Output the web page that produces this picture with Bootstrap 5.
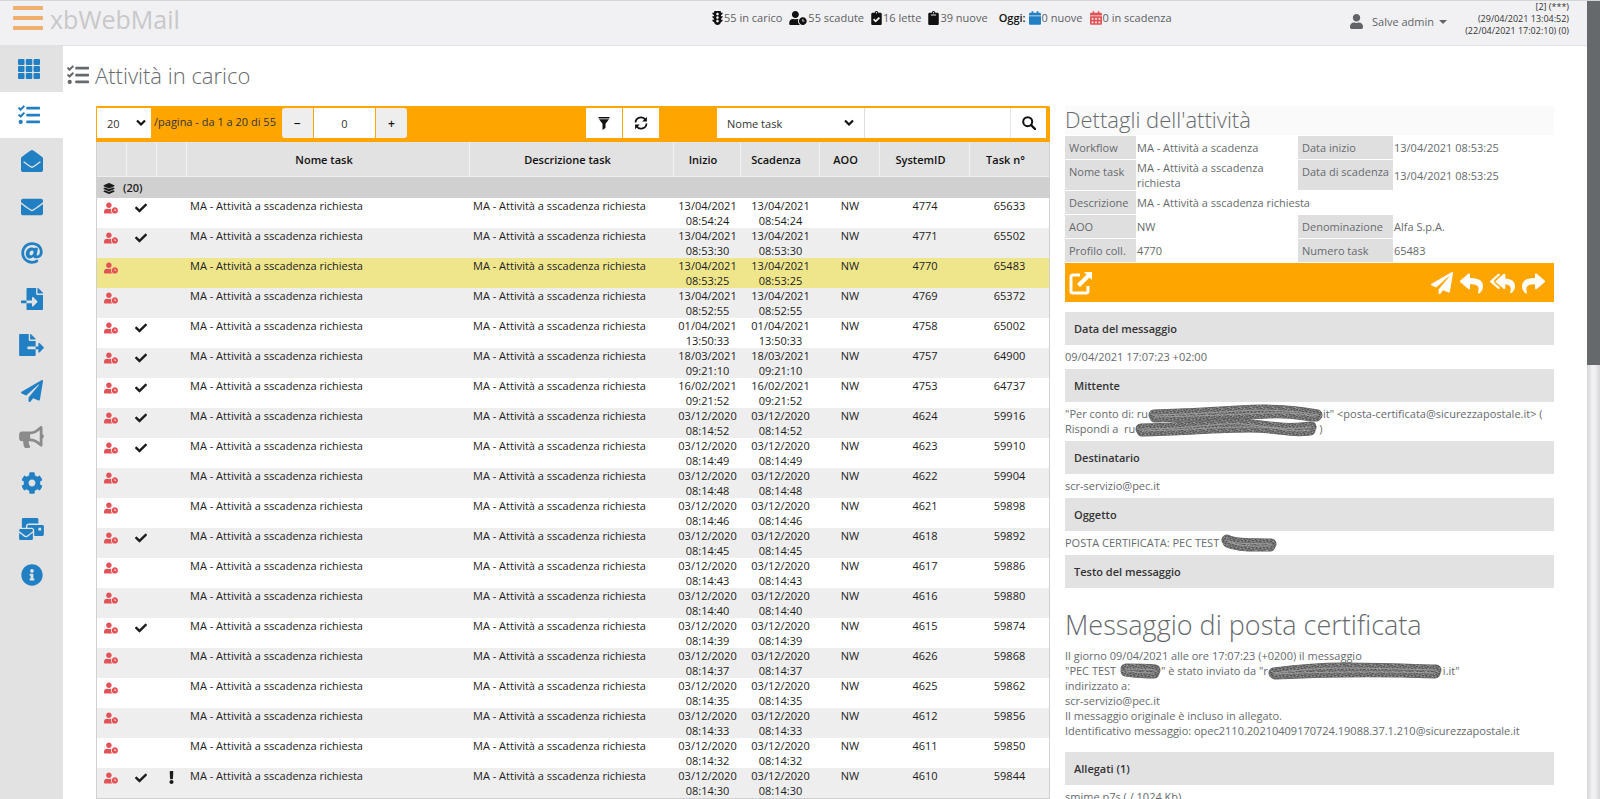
<!DOCTYPE html>
<html lang="it">
<head>
<meta charset="utf-8">
<meta name="viewport" content="width=device-width, initial-scale=1">
<title>xbWebMail - Attività in carico</title>
<link href="https://cdn.jsdelivr.net/npm/bootstrap@5.3.0/dist/css/bootstrap.min.css" rel="stylesheet">
<style>
  :root { --blue: #2080c3; --orange: #ffa500; --red: #e25256; --panel: #e2e2e2; --ink: #666a6d; }
  body { font-family: "Open Sans", sans-serif; font-size: 11px; line-height: 15px; color: var(--ink); background: #fff; font-weight: 400; }
  .shell { height: 100vh; border-top: 1px solid #d5d5d8; overflow: hidden; }
  svg.ico { fill: currentColor; display: inline-block; flex: none; }

  .topbar { display: grid; grid-template-columns: 712fr 632fr 243fr; height: 45px; background: #f1f1f3; border-bottom: 1px solid #e1e1e4; flex: none; }
  .brand { gap: 7px; padding: 0 0 8px 13px; color: #c8c8ca; font-size: 25px; line-height: 32px; text-decoration: none; }
  .brand svg { color: #eeb06c; }
  .stats { color: #5d6063; gap: 7px; height: 33px; }
  .stats b { color: #111; font-weight: 600; margin-left: 4px; margin-right: -4px; }
  .stats svg { color: #111; }
  .stat { gap: 1px; }
  .who { border: 0; background: none; color: #606467; gap: 9px; padding: 0 0 3px 6px; white-space: nowrap; font-weight: 500; }
  .who::after { margin-left: -4px; border-width: 4px 4px 0; }
  .session { color: #333; font-size: 9px; line-height: 12px; padding-right: 18px; white-space: nowrap; }

  .rail { width: 63px; background: var(--panel); }
  .rail a { height: 46px; color: var(--blue); display: flex; align-items: center; justify-content: center; }
  .rail a.active { background: #fff; }
  .rail a.lead-item { padding-right: 5px; }
  .rail a.off { color: #8b8b8b; }

  .main-area { padding: 0 33px 0 4px; }
  .page-title { height: 60px; gap: 6px; margin: 0; padding-bottom: 2px; font-size: 22px; line-height: 30px; font-weight: 300; }
  .split { display: grid; grid-template-columns: 954fr 489fr; gap: 15px; padding-left: 29px; align-items: start; }

  .grid-card { border: 1px solid #d0d0d0; border-top: 0; }
  .tools { height: 36px; margin: 0 -1px; padding: 2px 4px 2px 1px; background: var(--orange); border-radius: 2px 2px 0 0; color: #333; }
  .tools select, .tools input { border: 0; border-radius: 0; height: 30px; background-color: #fff; color: #333; font-size: 11px; box-shadow: none; min-width: 0; }
  .tools select { appearance: none; padding: 0 10px; background-image: url("data:image/svg+xml,%3Csvg xmlns='http://www.w3.org/2000/svg' viewBox='0 0 10 8'%3E%3Cpath d='M1 1.5l4 4 4-4' fill='none' stroke='%23111' stroke-width='2.2'/%3E%3C/svg%3E"); background-repeat: no-repeat; background-size: 10px 8px; background-position: right 5px center; }
  .tools button { border: 0; border-radius: 0; height: 30px; padding: 0; background: #fff; color: #111; display: flex; align-items: center; justify-content: center; font-size: 12px; }
  .tools .range { padding: 6px 0 0 3px; white-space: nowrap; }
  .stepper { width: 125px; margin-left: 6px; gap: 1px; }
  .stepper button { width: 31px; background: #eee; font-weight: 600; }
  .stepper button:first-child { border-radius: 3px 0 0 3px; }
  .stepper button:last-child { border-radius: 0 3px 3px 0; }
  .stepper input { flex: 1; text-align: center; }
  .duo { gap: 1px; margin-right: 58px; }
  .duo button { width: 36px; }
  .finder { width: 329px; }
  .finder select { width: 148px; background-position: right 10px center; border-right: 1px solid #ddd; }
  .finder input { flex: 1; }
  .finder button { width: 36px; border-left: 1px solid #e5e5e5; }

  .task-table { width: 100%; table-layout: fixed; border-collapse: separate; border-spacing: 0; color: #1c1c1c; }
  .task-table th { background: var(--panel); height: 35px; padding: 0 8px 0 0; text-align: center; font-weight: 600; border-right: 1px solid #f2f2f2; border-bottom: 1px solid #eee; color: #111; }
  .task-table th:last-child { border-right: 0; }
  .task-table .group-row td { background: #d0d0d0; height: 21px; font-weight: 600; padding: 0 0 1px 6px; }
  .task-table tbody td { padding: 0; height: 30px; vertical-align: top; text-align: center; }
  .task-table tbody tr:nth-child(even) td { background: #eee; }
  .task-table tbody tr:nth-child(odd) td { background: #fff; }
  .task-table tbody tr.picked td { background: #efe68c; }
  .task-table tbody td.txt { text-align: left; padding-left: 3px; }
  .task-table tbody td.sym { padding-right: 2px; }
  .task-table td.sym svg { display: block; margin: 3px auto 0; }
  .late { color: var(--red); }

  .detail h2 { font-size: 22px; line-height: 27px; margin: 0; padding-bottom: 2px; background: #fafafa; font-weight: 300; }
  .facts { width: 100%; table-layout: fixed; border-collapse: separate; border-spacing: 0 1px; }
  .facts th { background: #dfdfdf; font-weight: 400; padding: 4px; border-right: 1px solid #fff; vertical-align: top; white-space: nowrap; }
  .facts td { padding: 0; vertical-align: middle; }
  .actions { background: var(--orange); height: 39px; padding: 1px 9px 0 4px; margin-bottom: 10px; }
  .actions button { border: 0; background: none; padding: 0; color: #fff; display: flex; }
  .replies { gap: 7px; }
  .fieldcap { background: var(--panel); height: 33px; margin: 0; padding: 9px; font-size: 11px; line-height: 15px; font-weight: 600; color: #333; }
  .fieldval { margin: 0; padding: 4px 0 5px; }
  .mail-body h1 { font-size: 27px; line-height: 32px; font-weight: 300; margin: 21px 0 7px; }
  .mail-body p { margin: 0 0 14px; }
  .ink-over { position: relative; display: inline-block; height: 10px; }
  .ink-over svg { position: absolute; left: 0; top: -7px; overflow: visible; fill: none; stroke-linecap: round; stroke-linejoin: round; }

  .scroll-track { width: 13px; background: linear-gradient(90deg, #d5d5d8, #f1f1f3 40%, #f1f1f3 60%, #d5d5d8); flex: none; }
  .scroll-thumb { background: #65696c; }
</style>
</head>
<body>
<svg width="0" height="0" class="position-absolute" aria-hidden="true">
  <pattern id="hatch" width="11" height="7" patternUnits="userSpaceOnUse">
    <path fill="#747474" d="M0 0h11v7H0z"/>
    <path fill="#565656" d="M0 0h2v1H0zM4 0h1v2H4zM7 1h2v1H7zM1 2h1v1H1zM6 3h1v1H6zM9 3h2v1H9zM2 4h2v1H2zM0 5h1v1H0zM5 5h2v1H5zM8 6h1v1H8zM3 6h1v1H3z"/>
    <path fill="#969696" d="M2 1h1v1H2zM6 0h1v1H6zM3 3h2v1H3zM8 4h1v1H8zM10 1h1v1h-1zM1 6h1v1H1zM7 5h1v1H7zM5 4h1v1H5z"/>
  </pattern>
  <symbol id="i-bars" viewBox="0 0 30 26"><path d="M1 0h28a1 1 0 0 1 1 1v2a1 1 0 0 1-1 1H1a1 1 0 0 1-1-1V1a1 1 0 0 1 1-1zM1 10h28a1 1 0 0 1 1 1v2a1 1 0 0 1-1 1H1a1 1 0 0 1-1-1v-2a1 1 0 0 1 1-1zM1 20h28a1 1 0 0 1 1 1v2a1 1 0 0 1-1 1H1a1 1 0 0 1-1-1v-2a1 1 0 0 1 1-1z"/></symbol>
  <symbol id="i-grid" viewBox="0 0 22 20"><path d="M1 0h4.500a1 1 0 0 1 1 1v4a1 1 0 0 1-1 1H1a1 1 0 0 1-1-1V1a1 1 0 0 1 1-1zm7.800 0h4.500a1 1 0 0 1 1 1v4a1 1 0 0 1-1 1H8.800a1 1 0 0 1-1-1V1a1 1 0 0 1 1-1zm7.700 0H21a1 1 0 0 1 1 1v4a1 1 0 0 1-1 1h-4.500a1 1 0 0 1-1-1V1a1 1 0 0 1 1-1zM1 7h4.500a1 1 0 0 1 1 1v4a1 1 0 0 1-1 1H1a1 1 0 0 1-1-1V8a1 1 0 0 1 1-1zm7.800 0h4.500a1 1 0 0 1 1 1v4a1 1 0 0 1-1 1H8.800a1 1 0 0 1-1-1V8a1 1 0 0 1 1-1zm7.700 0H21a1 1 0 0 1 1 1v4a1 1 0 0 1-1 1h-4.500a1 1 0 0 1-1-1V8a1 1 0 0 1 1-1zM1 14h4.500a1 1 0 0 1 1 1v4a1 1 0 0 1-1 1H1a1 1 0 0 1-1-1v-4a1 1 0 0 1 1-1zm7.800 0h4.500a1 1 0 0 1 1 1v4a1 1 0 0 1-1 1H8.800a1 1 0 0 1-1-1v-4a1 1 0 0 1 1-1zm7.700 0H21a1 1 0 0 1 1 1v4a1 1 0 0 1-1 1h-4.500a1 1 0 0 1-1-1v-4a1 1 0 0 1 1-1z"/></symbol>
  <symbol id="i-tasks" viewBox="0 0 512 512"><path d="M139.61 35.5a12 12 0 0 0-17 0L58.93 98.81l-22.7-22.12a12 12 0 0 0-17 0L3.53 92.41a12 12 0 0 0 0 17l47.59 47.4a12.78 12.78 0 0 0 17.61 0l15.59-15.62L156.52 69a12.09 12.09 0 0 0 .09-17zm0 159.19a12 12 0 0 0-17 0l-63.68 63.72-22.7-22.1a12 12 0 0 0-17 0L3.53 252a12 12 0 0 0 0 17L51 316.5a12.77 12.77 0 0 0 17.6 0l15.7-15.69 72.2-72.22a12 12 0 0 0 .09-16.9zM64 368c-26.49 0-48.59 21.5-48.59 48S37.53 464 64 464a48 48 0 0 0 0-96zm432 16H208a16 16 0 0 0-16 16v32a16 16 0 0 0 16 16h288a16 16 0 0 0 16-16v-32a16 16 0 0 0-16-16zm0-320H208a16 16 0 0 0-16 16v32a16 16 0 0 0 16 16h288a16 16 0 0 0 16-16V80a16 16 0 0 0-16-16zm0 160H208a16 16 0 0 0-16 16v32a16 16 0 0 0 16 16h288a16 16 0 0 0 16-16v-32a16 16 0 0 0-16-16z"/></symbol>
  <symbol id="i-env-open" viewBox="0 0 512 512"><path d="M512 464c0 26.51-21.49 48-48 48H48c-26.51 0-48-21.49-48-48V200.724a48 48 0 0 1 18.387-37.776c24.913-19.529 45.501-35.365 164.2-121.511C199.412 29.17 232.797-.347 256 .003c23.198-.354 56.596 29.172 73.413 41.433 118.687 86.137 139.303 101.995 164.2 121.512A48 48 0 0 1 512 200.724V464zm-65.666-196.605c-2.563-3.728-7.7-4.595-11.339-1.907-22.845 16.873-55.462 40.705-105.582 77.079-16.825 12.266-50.21 41.781-73.413 41.43-23.211.344-56.559-29.143-73.413-41.43-50.114-36.37-82.734-60.204-105.582-77.079-3.639-2.688-8.776-1.821-11.339 1.907l-9.072 13.196a7.998 7.998 0 0 0 1.839 10.967c22.887 16.899 55.454 40.69 105.303 76.868 20.274 14.781 56.524 47.813 92.264 47.573 35.724.242 71.961-32.771 92.263-47.573 49.85-36.179 82.418-59.97 105.303-76.868a7.998 7.998 0 0 0 1.839-10.967l-9.071-13.196z"/></symbol>
  <symbol id="i-env" viewBox="0 0 512 512"><path d="M502.3 190.8c3.9-3.1 9.7-.2 9.7 4.7V400c0 26.500-21.500 48-48 48H48c-26.500 0-48-21.500-48-48V195.600c0-5 5.700-7.800 9.700-4.700 22.400 17.400 52.100 39.500 154.100 113.600 21.100 15.400 56.700 47.800 92.200 47.600 35.700.3 72-32.800 92.300-47.600 102-74.100 131.600-96.300 154-113.700zM256 320c23.200.4 56.600-29.200 73.400-41.400 132.700-96.300 142.800-104.700 173.400-128.700 5.800-4.500 9.200-11.500 9.200-18.900v-19c0-26.500-21.500-48-48-48H48c-26.500 0-48 21.500-48 48v19c0 7.400 3.400 14.300 9.200 18.900 30.600 23.900 40.700 32.400 173.400 128.700 16.800 12.200 50.200 41.800 73.400 41.400z"/></symbol>
  <symbol id="i-at" viewBox="0 0 512 512"><path d="M256 8C118.941 8 8 118.919 8 256c0 137.059 110.919 248 248 248 48.154 0 95.342-14.14 135.408-40.223 12.005-7.815 14.625-24.288 5.552-35.372l-10.177-12.433c-7.671-9.371-21.179-11.667-31.373-5.129C325.92 429.757 291.314 440 256 440c-101.458 0-184-82.542-184-184S154.542 72 256 72c100.139 0 184 57.619 184 160 0 38.786-21.093 79.742-58.17 83.693-17.349-.454-16.91-12.857-13.476-30.024l23.433-121.11C394.653 149.75 383.308 136 368.225 136h-44.981a13.518 13.518 0 0 0-13.432 11.993l-.01.092c-14.697-17.901-40.448-21.775-59.971-21.775-74.58 0-137.831 62.234-137.831 151.46 0 65.303 36.785 105.87 96 105.87 26.984 0 57.369-15.637 74.991-38.333 9.522 34.104 40.613 34.103 70.71 34.103C462.609 379.41 504 307.798 504 232 504 95.653 394.023 8 256 8zm-21.68 304.43c-22.249 0-36.07-15.623-36.07-40.771 0-44.993 30.779-72.729 58.63-72.729 22.292 0 35.601 15.241 35.601 40.77 0 45.061-33.875 72.73-58.161 72.73z"/></symbol>
  <symbol id="i-import" viewBox="0 0 512 512"><path d="M16 288c-8.800 0-16 7.200-16 16v32c0 8.800 7.200 16 16 16h112v-64zm489-183L407.100 7c-4.500-4.500-10.600-7-17-7H384v128h128v-6.100c0-6.300-2.500-12.400-7-16.900zm-153 31V0H152c-13.300 0-24 10.700-24 24v264h128v-65.200c0-14.300 17.300-21.400 27.400-11.300L379 308c6.600 6.700 6.600 17.400 0 24l-95.700 96.400c-10.100 10.100-27.400 3-27.400-11.300V352H128v136c0 13.300 10.700 24 24 24h336c13.300 0 24-10.700 24-24V160H376c-13.200 0-24-10.800-24-24z"/></symbol>
  <symbol id="i-export" viewBox="0 0 576 512"><path d="M384 121.900c0-6.300-2.500-12.400-7-16.900L279.100 7c-4.500-4.500-10.600-7-17-7H256v128h128zM571 308l-95.700-96.400c-10.100-10.100-27.400-3-27.400 11.300V288h-64v64h64v65.200c0 14.300 17.300 21.400 27.400 11.300L571 332c6.600-6.600 6.600-17.400 0-24zm-379 28v-32c0-8.800 7.200-16 16-16h176V160H248c-13.200 0-24-10.800-24-24V0H24C10.700 0 0 10.700 0 24v464c0 13.300 10.700 24 24 24h336c13.300 0 24-10.700 24-24V352H208c-8.800 0-16-7.200-16-16z"/></symbol>
  <symbol id="i-plane" viewBox="0 0 512 512"><path d="M476 3.200L12.500 270.600c-18.100 10.400-15.800 35.600 2.200 43.200L121 358.400l287.300-253.200c5.500-4.900 13.300 2.600 8.600 8.300L176 407v80.500c0 23.600 28.500 32.900 42.500 15.800L282 426l124.600 52.200c14.200 6 30.400-2.900 33-18.200l72-432C515 7.800 493.300-6.800 476 3.200z"/></symbol>
  <symbol id="i-horn" viewBox="0 0 576 512"><path d="M576 240c0-23.63-12.95-44.04-32-55.12V32.01C544 23.26 537.02 0 512 0c-7.12 0-14.19 2.38-19.98 7.02l-85.03 68.03C364.28 109.19 310.66 128 256 128H64c-35.35 0-64 28.65-64 64v96c0 35.35 28.65 64 64 64h33.7c-1.39 10.48-2.18 21.14-2.18 32 0 39.77 9.26 77.35 25.56 110.94 5.19 10.69 16.52 17.06 28.4 17.06h74.28c26.05 0 41.69-29.84 25.9-50.56-16.4-21.52-26.15-48.36-26.15-77.44 0-11.11 1.62-21.79 4.41-32H256c54.66 0 108.28 18.81 150.98 52.95l85.03 68.03a32.023 32.023 0 0 0 19.98 7.02c24.92 0 32-22.78 32-32V295.13C563.05 284.04 576 263.63 576 240zm-96 141.42l-33.05-26.44C392.95 311.78 325.12 288 256 288v-96c69.12 0 136.95-23.78 190.95-66.98L480 98.58v282.84z"/></symbol>
  <symbol id="i-cog" viewBox="0 0 512 512"><path d="M487.400 315.700l-42.600-24.600c4.300-23.200 4.300-47 0-70.200l42.600-24.600c4.900-2.800 7.100-8.600 5.500-14-11.100-35.600-30-67.800-54.700-94.600-3.800-4.100-10-5.100-14.800-2.300L380.800 110c-17.900-15.400-38.500-27.300-60.800-35.100V25.800c0-5.600-3.900-10.500-9.400-11.700-36.700-8.200-74.300-7.800-109.200 0-5.500 1.200-9.400 6.100-9.400 11.700V75c-22.200 7.900-42.800 19.800-60.800 35.100L88.700 85.500c-4.900-2.800-11-1.900-14.800 2.300-24.700 26.700-43.600 58.900-54.700 94.600-1.700 5.400.6 11.200 5.500 14L67.300 221c-4.300 23.200-4.300 47 0 70.200l-42.600 24.600c-4.900 2.800-7.100 8.600-5.500 14 11.100 35.600 30 67.800 54.700 94.600 3.800 4.100 10 5.100 14.800 2.300l42.600-24.600c17.900 15.400 38.500 27.300 60.800 35.100v49.200c0 5.600 3.900 10.500 9.400 11.700 36.700 8.200 74.300 7.800 109.200 0 5.500-1.200 9.400-6.100 9.400-11.700v-49.200c22.200-7.900 42.800-19.800 60.800-35.100l42.600 24.600c4.900 2.800 11 1.900 14.800-2.300 24.700-26.700 43.600-58.900 54.700-94.600 1.500-5.500-.7-11.300-5.600-14.100zM256 336c-44.100 0-80-35.900-80-80s35.900-80 80-80 80 35.900 80 80-35.900 80-80 80z"/></symbol>
  <symbol id="i-bulk" viewBox="0 0 576 512"><path d="M160 448c-25.600 0-51.200-22.400-64-32-64-44.800-83.200-60.800-96-70.400V480c0 17.670 14.330 32 32 32h256c17.670 0 32-14.330 32-32V345.600c-12.800 9.600-32 25.600-96 70.400-12.800 9.600-38.400 32-64 32zm128-192H32c-17.670 0-32 14.330-32 32v16c25.600 19.200 22.400 19.200 115.200 86.400 9.600 6.400 28.800 25.600 44.800 25.600s35.200-19.200 44.800-22.400c92.800-67.200 89.600-67.200 115.200-86.400V288c0-17.670-14.330-32-32-32zm256-96H224c-17.670 0-32 14.330-32 32v32h96c33.210 0 60.590 25.420 63.710 57.820l.29-.22V416h192c17.670 0 32-14.330 32-32V192c0-17.670-14.330-32-32-32zm-32 128h-64v-64h64v64zm-352-96c0-35.290 28.710-64 64-64h224V32c0-17.670-14.330-32-32-32H96C78.330 0 64 14.330 64 32v192h96v-32z"/></symbol>
  <symbol id="i-info" viewBox="0 0 512 512"><path d="M256 8C119.043 8 8 119.083 8 256c0 136.997 111.043 248 248 248s248-111.003 248-248C504 119.083 392.957 8 256 8zm0 110c23.196 0 42 18.804 42 42s-18.804 42-42 42-42-18.804-42-42 18.804-42 42-42zm56 254c0 6.627-5.373 12-12 12h-88c-6.627 0-12-5.373-12-12v-24c0-6.627 5.373-12 12-12h12v-64h-12c-6.627 0-12-5.373-12-12v-24c0-6.627 5.373-12 12-12h64c6.627 0 12 5.373 12 12v100h12c6.627 0 12 5.373 12 12v24z"/></symbol>
  <symbol id="i-uclock" viewBox="0 0 640 512"><path d="M496 224c-79.600 0-144 64.400-144 144s64.400 144 144 144 144-64.400 144-144-64.400-144-144-144zm64 150.300c0 5.300-4.400 9.700-9.700 9.700h-60.600c-5.300 0-9.700-4.400-9.700-9.700v-76.600c0-5.300 4.400-9.700 9.700-9.700h12.600c5.300 0 9.700 4.400 9.700 9.700V352h38.300c5.300 0 9.700 4.400 9.700 9.700v12.600zM320 368c0-27.800 6.700-54.100 18.200-77.500-8-1.500-16.200-2.500-24.600-2.500h-16.700c-22.200 10.200-46.900 16-72.900 16s-50.600-5.800-72.900-16h-16.700C60.200 288 0 348.200 0 422.400V464c0 26.500 21.500 48 48 48h347.100c-45.300-31.900-75.100-84.500-75.100-144zm-96-112c70.700 0 128-57.300 128-128S294.700 0 224 0 96 57.300 96 128s57.300 128 128 128z"/></symbol>
  <symbol id="i-check" viewBox="0 0 512 512"><path d="M173.898 439.404l-166.4-166.4c-9.997-9.997-9.997-26.206 0-36.204l36.203-36.204c9.997-9.998 26.207-9.998 36.204 0L192 312.69 432.095 72.596c9.997-9.997 26.207-9.997 36.204 0l36.203 36.204c9.997 9.997 9.997 26.206 0 36.204l-294.4 294.401c-9.998 9.997-26.207 9.997-36.204-.001z"/></symbol>
  <symbol id="i-excl" viewBox="0 0 192 512"><path d="M176 432c0 44.112-35.888 80-80 80s-80-35.888-80-80 35.888-80 80-80 80 35.888 80 80zM25.26 25.199l13.6 272C39.499 309.972 50.041 320 62.83 320h66.34c12.789 0 23.331-10.028 23.97-22.801l13.6-272C167.425 11.49 156.496 0 142.77 0H49.23C35.504 0 24.575 11.49 25.26 25.199z"/></symbol>
  <symbol id="i-layers" viewBox="0 0 512 512"><path d="M12.41 148.02l232.94 105.67c6.8 3.09 14.49 3.09 21.29 0l232.94-105.67c16.55-7.51 16.55-32.52 0-40.03L266.65 2.31a25.607 25.607 0 0 0-21.29 0L12.41 107.98c-16.55 7.51-16.55 32.53 0 40.04zm487.18 88.28l-58.09-26.33-161.64 73.27c-7.56 3.43-15.59 5.17-23.86 5.17s-16.29-1.74-23.86-5.17L70.51 209.97l-58.1 26.33c-16.55 7.5-16.55 32.5 0 40l232.94 105.59c6.8 3.08 14.49 3.08 21.29 0L499.59 276.3c16.55-7.5 16.55-32.5 0-40zm0 127.8l-57.87-26.23-161.86 73.37c-7.56 3.43-15.59 5.17-23.86 5.17s-16.29-1.74-23.86-5.17L70.29 337.87 12.41 364.1c-16.55 7.5-16.55 32.5 0 40l232.94 105.59c6.8 3.08 14.49 3.08 21.29 0L499.59 404.1c16.55-7.5 16.55-32.5 0-40z"/></symbol>
  <symbol id="i-light" viewBox="0 0 384 512"><path d="M384 192h-64v-37.88c37.2-13.22 64-48.38 64-90.12h-64V32c0-17.67-14.33-32-32-32H96C78.33 0 64 14.33 64 32v32H0c0 41.74 26.8 76.9 64 90.12V192H0c0 41.74 26.8 76.9 64 90.12V320H0c0 42.84 28.25 78.69 66.99 91.05C79.42 468.72 130.6 512 192 512s112.58-43.28 125.01-100.95C355.75 398.69 384 362.84 384 320h-64v-37.88c37.2-13.22 64-48.38 64-90.12zM192 416c-26.51 0-48-21.49-48-48s21.49-48 48-48 48 21.49 48 48-21.49 48-48 48zm0-128c-26.51 0-48-21.49-48-48s21.49-48 48-48 48 21.49 48 48-21.49 48-48 48zm0-128c-26.51 0-48-21.49-48-48s21.49-48 48-48 48 21.49 48 48-21.49 48-48 48z"/></symbol>
  <symbol id="i-clip" viewBox="0 0 384 512"><path d="M384 112v352c0 26.51-21.49 48-48 48H48c-26.51 0-48-21.49-48-48V112c0-26.51 21.49-48 48-48h80c0-35.29 28.71-64 64-64s64 28.71 64 64h80c26.51 0 48 21.49 48 48zM192 40c-13.255 0-24 10.745-24 24s10.745 24 24 24 24-10.745 24-24-10.745-24-24-24m96 114v-20a6 6 0 0 0-6-6H102a6 6 0 0 0-6 6v20a6 6 0 0 0 6 6h180a6 6 0 0 0 6-6z"/></symbol>
  <symbol id="i-clipcheck" viewBox="0 0 384 512"><path d="M336 64h-80c0-35.300-28.700-64-64-64s-64 28.700-64 64H48C21.500 64 0 85.500 0 112v352c0 26.500 21.500 48 48 48h288c26.500 0 48-21.500 48-48V112c0-26.500-21.500-48-48-48zM192 40c13.300 0 24 10.700 24 24s-10.700 24-24 24-24-10.700-24-24 10.700-24 24-24zm121.200 231.800l-143 141.800c-4.700 4.700-12.300 4.600-17-.1l-82.600-83.300c-4.700-4.700-4.600-12.300.1-17L99.100 285c4.700-4.700 12.300-4.600 17 .1l46 46.400 106-105.200c4.700-4.700 12.300-4.600 17 .1l28.200 28.400c4.700 4.800 4.600 12.300-.1 17z"/></symbol>
  <symbol id="i-cal" viewBox="0 0 448 512"><path d="M12 192h424c6.600 0 12 5.400 12 12v260c0 26.500-21.500 48-48 48H48c-26.500 0-48-21.500-48-48V204c0-6.600 5.400-12 12-12zm436-44v-36c0-26.500-21.500-48-48-48h-48V12c0-6.600-5.400-12-12-12h-40c-6.600 0-12 5.400-12 12v52H160V12c0-6.600-5.400-12-12-12h-40c-6.600 0-12 5.400-12 12v52H48C21.500 64 0 85.500 0 112v36c0 6.600 5.400 12 12 12h424c6.600 0 12-5.400 12-12z"/></symbol>
  <symbol id="i-caldays" viewBox="0 0 448 512"><path fill-rule="evenodd" d="M12 192h424c6.600 0 12 5.400 12 12v260c0 26.500-21.500 48-48 48H48c-26.500 0-48-21.500-48-48V204c0-6.600 5.400-12 12-12zm436-44v-36c0-26.500-21.500-48-48-48h-48V12c0-6.600-5.400-12-12-12h-40c-6.600 0-12 5.400-12 12v52H160V12c0-6.600-5.400-12-12-12h-40c-6.600 0-12 5.400-12 12v52H48C21.500 64 0 85.500 0 112v36c0 6.600 5.400 12 12 12h424c6.600 0 12-5.400 12-12zM64 256h64v64H64zm128 0h64v64h-64zm128 0h64v64h-64zM64 384h64v64H64zm128 0h64v64h-64zm128 0h64v64h-64z"/></symbol>
  <symbol id="i-user" viewBox="0 0 448 512"><path d="M224 256c70.700 0 128-57.300 128-128S294.700 0 224 0 96 57.300 96 128s57.300 128 128 128zm89.600 32h-16.700c-22.200 10.200-46.900 16-72.900 16s-50.600-5.800-72.900-16h-16.700C60.200 288 0 348.200 0 422.400V464c0 26.500 21.500 48 48 48h352c26.500 0 48-21.500 48-48v-41.600c0-74.200-60.200-134.400-134.400-134.400z"/></symbol>
  <symbol id="i-reply" viewBox="0 0 512 512"><path d="M8.309 189.836L184.313 37.851C199.719 24.546 224 35.347 224 56.015v80.053c160.629 1.839 288 34.032 288 186.258 0 61.441-39.581 122.309-83.333 154.132-13.653 9.931-33.111-2.533-28.077-18.631 45.344-145.012-21.507-183.51-176.59-185.742V360c0 20.7-24.3 31.453-39.687 18.164l-176.004-152c-11.071-9.562-11.086-26.753 0-36.328z"/></symbol>
  <symbol id="i-forward" viewBox="0 0 512 512"><path transform="matrix(-1 0 0 1 512 0)" d="M8.309 189.836L184.313 37.851C199.719 24.546 224 35.347 224 56.015v80.053c160.629 1.839 288 34.032 288 186.258 0 61.441-39.581 122.309-83.333 154.132-13.653 9.931-33.111-2.533-28.077-18.631 45.344-145.012-21.507-183.51-176.59-185.742V360c0 20.7-24.3 31.453-39.687 18.164l-176.004-152c-11.071-9.562-11.086-26.753 0-36.328z"/></symbol>
  <symbol id="i-replyall" viewBox="0 0 576 512"><path d="M136.309 189.836L312.313 37.851C327.72 24.546 352 35.348 352 56.015v82.763c129.182 10.231 224 52.212 224 183.548 0 61.441-39.582 122.309-83.333 154.132-13.653 9.931-33.111-2.533-28.077-18.631 38.512-123.162-3.922-169.482-112.59-182.015v84.175c0 20.701-24.3 31.453-39.687 18.164L136.309 226.164c-11.071-9.561-11.086-26.753 0-36.328zm-128 36.328L184.313 378.15C199.7 391.439 224 380.687 224 359.986v-15.818l-108.606-93.785A55.96 55.96 0 0 1 96 207.998a55.953 55.953 0 0 1 19.393-42.38L224 71.832V56.015c0-20.667-24.28-31.469-39.687-18.164L8.309 189.836c-11.086 9.575-11.071 26.767 0 36.328z"/></symbol>
  <symbol id="i-filter" viewBox="0 0 12 13"><path d="M.5 0h11v1.500H.5zM1 2.300h10L7.500 6.800V11L4.500 13V6.800z"/></symbol>
  <symbol id="i-sync" viewBox="0 0 14 14"><g fill="none" stroke="currentColor" stroke-width="1.700"><path d="M1.500 6.500A5.400 5.400 0 0 1 11.500 4"/><path d="M12.500 7.500A5.400 5.400 0 0 1 2.500 10"/></g><path d="M12.900.8v4.700H8.200zM1.100 13.200V8.500h4.700z"/></symbol>
  <symbol id="i-search" viewBox="0 0 14 14"><circle cx="5.700" cy="5.700" r="4.500" fill="none" stroke="currentColor" stroke-width="2"/><path d="M9 9l4 4" stroke="currentColor" stroke-width="2.400" stroke-linecap="round"/></symbol>
  <symbol id="i-external" viewBox="0 0 24 24"><path d="M11 4H4a2 2 0 0 0-2 2v14a2 2 0 0 0 2 2h13a2 2 0 0 0 2-2v-5" fill="none" stroke="currentColor" stroke-width="3"/><path d="M15 1h8v8l-2.500-2.500L11 16l-3-3 9.500-9.500z"/></symbol>
</svg>

<div class="shell d-flex">
  <div class="d-flex flex-column flex-grow-1">
    <header class="topbar">
      <a class="brand d-flex align-items-center" href="#"><svg class="ico" width="30" height="26"><use href="#i-bars"/></svg>xbWebMail</a>
      <div class="stats d-flex align-items-center text-nowrap">
        <span class="stat d-flex align-items-center"><svg class="ico" width="11" height="14"><use href="#i-light"/></svg>55 in carico</span>
        <span class="stat d-flex align-items-center"><svg class="ico" width="18" height="14"><use href="#i-uclock"/></svg>55 scadute</span>
        <span class="stat d-flex align-items-center"><svg class="ico" width="11" height="14"><use href="#i-clipcheck"/></svg>16 lette</span>
        <span class="stat d-flex align-items-center"><svg class="ico" width="11" height="14"><use href="#i-clip"/></svg>39 nuove</span>
        <b>Oggi:</b>
        <span class="stat d-flex align-items-center"><svg class="ico" width="12" height="14" style="color:var(--blue)"><use href="#i-cal"/></svg>0 nuove</span>
        <span class="stat d-flex align-items-center"><svg class="ico" width="12" height="14" style="color:var(--red)"><use href="#i-caldays"/></svg>0 in scadenza</span>
      </div>
      <div class="d-flex justify-content-between">
        <button type="button" class="who dropdown-toggle d-flex align-items-center"><svg class="ico" width="13" height="15"><use href="#i-user"/></svg>Salve admin</button>
        <div class="session text-end">[2] (***)<br>(29/04/2021 13:04:52)<br>(22/04/2021 17:02:10) (0)</div>
      </div>
    </header>

    <div class="d-flex flex-grow-1">
      <nav class="rail flex-shrink-0" aria-label="Menu principale">
        <a class="lead-item" href="#" aria-label="Cruscotto"><svg class="ico" width="22" height="20"><use href="#i-grid"/></svg></a>
        <a class="lead-item active" href="#" aria-label="Attività"><svg class="ico" width="22" height="22"><use href="#i-tasks"/></svg></a>
        <a href="#" aria-label="Posta in arrivo"><svg class="ico" width="22" height="22"><use href="#i-env-open"/></svg></a>
        <a href="#" aria-label="Messaggi"><svg class="ico" width="22" height="22"><use href="#i-env"/></svg></a>
        <a href="#" aria-label="Indirizzi"><svg class="ico" width="22" height="22"><use href="#i-at"/></svg></a>
        <a href="#" aria-label="Importa"><svg class="ico" width="22" height="22"><use href="#i-import"/></svg></a>
        <a href="#" aria-label="Esporta"><svg class="ico" width="25" height="22"><use href="#i-export"/></svg></a>
        <a href="#" aria-label="Invia"><svg class="ico" width="22" height="22"><use href="#i-plane"/></svg></a>
        <a class="off" href="#" aria-label="Avvisi"><svg class="ico" width="25" height="22"><use href="#i-horn"/></svg></a>
        <a href="#" aria-label="Impostazioni"><svg class="ico" width="22" height="22"><use href="#i-cog"/></svg></a>
        <a href="#" aria-label="Caselle"><svg class="ico" width="25" height="22"><use href="#i-bulk"/></svg></a>
        <a href="#" aria-label="Informazioni"><svg class="ico" width="22" height="22"><use href="#i-info"/></svg></a>
      </nav>

      <main class="main-area flex-grow-1">
        <h1 class="page-title d-flex align-items-center"><svg class="ico" width="22" height="22"><use href="#i-tasks"/></svg>Attività in carico</h1>
        <div class="split">
          <section class="grid-card">
            <div class="tools d-flex">
              <select aria-label="Righe per pagina" style="width:54px"><option>20</option></select>
              <span class="range">/pagina - da 1 a 20 di 55</span>
              <div class="stepper d-flex"><button type="button" aria-label="Precedente">−</button><input type="text" value="0" aria-label="Pagina"><button type="button" aria-label="Successiva">+</button></div>
              <div class="duo d-flex ms-auto"><button type="button" aria-label="Filtra"><svg class="ico" width="12" height="13"><use href="#i-filter"/></svg></button><button type="button" aria-label="Aggiorna"><svg class="ico" width="14" height="14"><use href="#i-sync"/></svg></button></div>
              <div class="finder d-flex"><select aria-label="Campo di ricerca"><option>Nome task</option></select><input type="text" aria-label="Testo da cercare"><button type="button" aria-label="Cerca"><svg class="ico" width="14" height="14"><use href="#i-search"/></svg></button></div>
            </div>
            <table class="task-table">
              <colgroup><col style="width:30px"><col style="width:30px"><col style="width:30px"><col><col style="width:204px"><col style="width:67px"><col style="width:79px"><col style="width:60px"><col style="width:90px"><col style="width:79px"></colgroup>
              <thead>
                <tr><th></th><th></th><th></th><th>Nome task</th><th>Descrizione task</th><th>Inizio</th><th>Scadenza</th><th>AOO</th><th>SystemID</th><th>Task n°</th></tr>
                <tr class="group-row"><td colspan="10"><svg class="ico align-middle" width="12" height="11"><use href="#i-layers"/></svg><span class="ms-2">(20)</span></td></tr>
              </thead>
              <tbody id="rows"></tbody>
            </table>
          </section>

          <aside class="detail">
            <h2>Dettagli dell'attività</h2>
            <table class="facts">
              <colgroup><col style="width:72px"><col><col style="width:96px"><col style="width:160px"></colgroup>
              <tr><th scope="row">Workflow</th><td>MA - Attività a scadenza</td><th scope="row">Data inizio</th><td>13/04/2021 08:53:25</td></tr>
              <tr><th scope="row">Nome task</th><td>MA - Attività a sscadenza<br>richiesta</td><th scope="row">Data di scadenza</th><td>13/04/2021 08:53:25</td></tr>
              <tr><th scope="row">Descrizione</th><td colspan="3">MA - Attività a sscadenza richiesta</td></tr>
              <tr><th scope="row">AOO</th><td>NW</td><th scope="row">Denominazione</th><td>Alfa S.p.A.</td></tr>
              <tr><th scope="row">Profilo coll.</th><td>4770</td><th scope="row">Numero task</th><td>65483</td></tr>
            </table>
            <div class="actions d-flex align-items-center justify-content-between">
              <button type="button" aria-label="Apri"><svg class="ico" width="24" height="24"><use href="#i-external"/></svg></button>
              <div class="replies d-flex">
                <button type="button" aria-label="Invia"><svg class="ico" width="22" height="22"><use href="#i-plane"/></svg></button>
                <button type="button" aria-label="Rispondi"><svg class="ico" width="23" height="23"><use href="#i-reply"/></svg></button>
                <button type="button" aria-label="Rispondi a tutti"><svg class="ico" width="25" height="23"><use href="#i-replyall"/></svg></button>
                <button type="button" aria-label="Inoltra"><svg class="ico" width="23" height="23"><use href="#i-forward"/></svg></button>
              </div>
            </div>
            <h3 class="fieldcap">Data del messaggio</h3>
            <p class="fieldval">09/04/2021 17:07:23 +02:00</p>
            <h3 class="fieldcap">Mittente</h3>
            <p class="fieldval">"Per conto di: ru<span class="ink-over" data-w="175" data-d="M6 11C40 10 60 9 90 7S150 7 169 11M7 13C60 12 90 10 120 9S158 12 168 12"></span>it" &lt;posta-certificata@sicurezzapostale.it&gt; (<br>Rispondi a&nbsp; ru<span class="ink-over" data-w="184" data-d="M6 10C40 10 60 7 90 5S140 13 176 8M7 12C50 11 80 8 115 8S150 14 175 11"></span>)</p>
            <h3 class="fieldcap">Destinatario</h3>
            <p class="fieldval">scr-servizio@pec.it</p>
            <h3 class="fieldcap">Oggetto</h3>
            <p class="fieldval">POSTA CERTIFICATA: PEC TEST<span class="ink-over" data-w="60" data-d="M8 7C17 12 32 10 52 11M9 9C22 14 37 13 51 13"></span></p>
            <h3 class="fieldcap">Testo del messaggio</h3>
            <div class="mail-body">
              <h1>Messaggio di posta certificata</h1>
              <p>Il giorno 09/04/2021 alle ore 17:07:23 (+0200) il messaggio<br>
              "PEC TEST <span class="ink-over" data-w="42" data-d="M7 8C15 8 25 8 36 9M7 10C15 11 25 12 35 12"></span>" è stato inviato da "r<span class="ink-over" data-w="175" data-d="M6 12C30 9 50 7 75 7S130 8 168 9M7 13C50 11 110 10 167 12"></span>i.it"<br>
              indirizzato a:<br>
              scr-servizio@pec.it<br>
              Il messaggio originale è incluso in allegato.<br>
              Identificativo messaggio: opec2110.20210409170724.19088.37.1.210@sicurezzapostale.it</p>
            </div>
            <h3 class="fieldcap">Allegati (1)</h3>
            <p class="fieldval">smime.p7s ( / 1024 Kb)</p>
          </aside>
        </div>
      </main>
    </div>
  </div>
  <div class="scroll-track" aria-hidden="true"><div class="scroll-thumb" style="height:45.6%"></div></div>
</div>

<script src="https://cdn.jsdelivr.net/npm/bootstrap@5.3.0/dist/js/bootstrap.bundle.min.js"></script>
<script>
  // date, time, system id, task number, flags (v = read, ! = urgent, s = selected)
  const tasks = [
    ['13/04/2021','08:54:24',4774,65633,'v'], ['13/04/2021','08:53:30',4771,65502,'v'],
    ['13/04/2021','08:53:25',4770,65483,'s'], ['13/04/2021','08:52:55',4769,65372,''],
    ['01/04/2021','13:50:33',4758,65002,'v'], ['18/03/2021','09:21:10',4757,64900,'v'],
    ['16/02/2021','09:21:52',4753,64737,'v'], ['03/12/2020','08:14:52',4624,59916,'v'],
    ['03/12/2020','08:14:49',4623,59910,'v'], ['03/12/2020','08:14:48',4622,59904,''],
    ['03/12/2020','08:14:46',4621,59898,''], ['03/12/2020','08:14:45',4618,59892,'v'],
    ['03/12/2020','08:14:43',4617,59886,''], ['03/12/2020','08:14:40',4616,59880,''],
    ['03/12/2020','08:14:39',4615,59874,'v'], ['03/12/2020','08:14:37',4626,59868,''],
    ['03/12/2020','08:14:35',4625,59862,''], ['03/12/2020','08:14:33',4612,59856,''],
    ['03/12/2020','08:14:32',4611,59850,''], ['03/12/2020','08:14:30',4610,59844,'v!']
  ];
  const ico = (id, w, h) => `<svg class="ico" width="${w}" height="${h}"><use href="#i-${id}"/></svg>`;
  const label = 'MA - Attività a sscadenza richiesta';
  document.getElementById('rows').innerHTML = tasks.map(t => {
    const when = `${t[0]}<br>${t[1]}`, f = t[4];
    const cls = f.includes('s') ? 'picked' : '';
    return `<tr class="${cls}"><td class="sym late">${ico('uclock', 14, 14)}</td>` +
      `<td class="sym">${f.includes('v') ? ico('check', 12, 14) : ''}</td>` +
      `<td class="sym">${f.includes('!') ? ico('excl', 5, 13) : ''}</td>` +
      `<td class="txt">${label}</td><td class="txt">${label}</td><td>${when}</td><td>${when}</td>` +
      `<td>NW</td><td>${t[2]}</td><td>${t[3]}</td></tr>`;
  }).join('');

  // marker strokes over private data
  document.querySelectorAll('.ink-over').forEach(el => {
    const w = el.dataset.w, d = el.dataset.d;
    el.style.width = w + 'px';
    el.innerHTML = `<svg width="${w}" height="24" aria-hidden="true"><g transform="translate(0 3)">` +
      `<path d="${d}" stroke="#606060" stroke-width="11"/><path d="${d}" stroke="url(#hatch)" stroke-width="10"/>` +
      `<path d="${d}" stroke="#a0a0a0" stroke-width="1" stroke-dasharray="4 1"/></g></svg>`;
  });
</script>
</body>
</html>
